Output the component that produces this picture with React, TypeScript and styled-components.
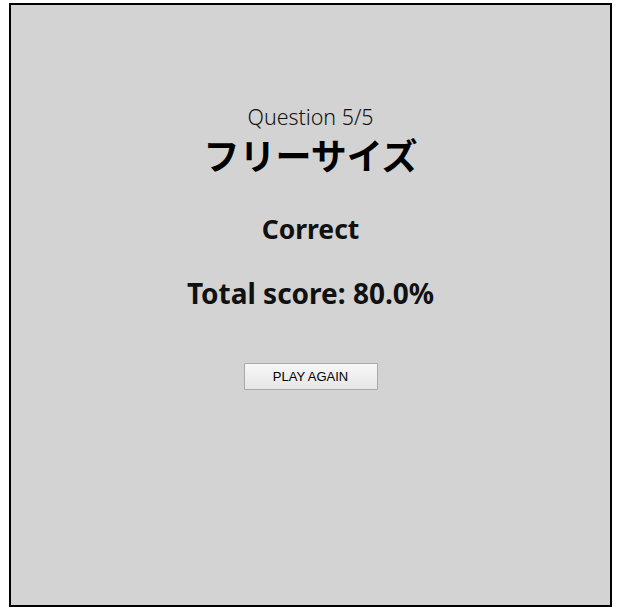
import React from "react";
import styled, { createGlobalStyle } from "styled-components";

const Global = createGlobalStyle`
  body {
    margin: 0;
    background: #ffffff;
    font-family: "Noto Sans", "Noto Sans CJK JP", sans-serif;
  }
`;

const Frame = styled.div`
  box-sizing: border-box;
  width: 603px;
  height: 604px;
  margin: 3px 0 0 9px;
  border: 2px solid #000;
  background: #d3d3d3;
  display: flex;
  flex-direction: column;
  align-items: center;
  padding-top: 98px;
`;

const Question = styled.div`
  font-size: 21.4px;
  font-weight: 300;
  color: #111;
  line-height: 28px;
`;

const Title = styled.h1`
  margin: 0;
  font-family: "Noto Sans CJK JP", sans-serif;
  font-size: 36px;
  font-weight: 700;
  line-height: 46px;
  color: #000;
`;

const Result = styled.div<{ $size: number; $top: number; $lh: number }>`
  margin-top: ${(p) => p.$top}px;
  font-size: ${(p) => p.$size}px;
  line-height: ${(p) => p.$lh}px;
  font-weight: 700;
  color: #111;
`;

const Button = styled.button`
  margin-top: 52px;
  width: 134px;
  height: 27px;
  font-family: "Liberation Sans", Arial, sans-serif;
  font-size: 13px;
  color: #000;
  background: linear-gradient(#f7f7f7, #e6e6e6);
  border: 1px solid #a8a8a8;
  border-radius: 1px;
  padding: 0;
`;

export default function App() {
  return (
    <>
      <Global />
      <Frame>
        <Question>Question 5/5</Question>
        <Title>フリーサイズ</Title>
        <Result $size={26.5} $lh={32} $top={36}>Correct</Result>
        <Result $size={28} $lh={36} $top={30}>Total score: 80.0%</Result>
        <Button>PLAY AGAIN</Button>
      </Frame>
    </>
  );
}
